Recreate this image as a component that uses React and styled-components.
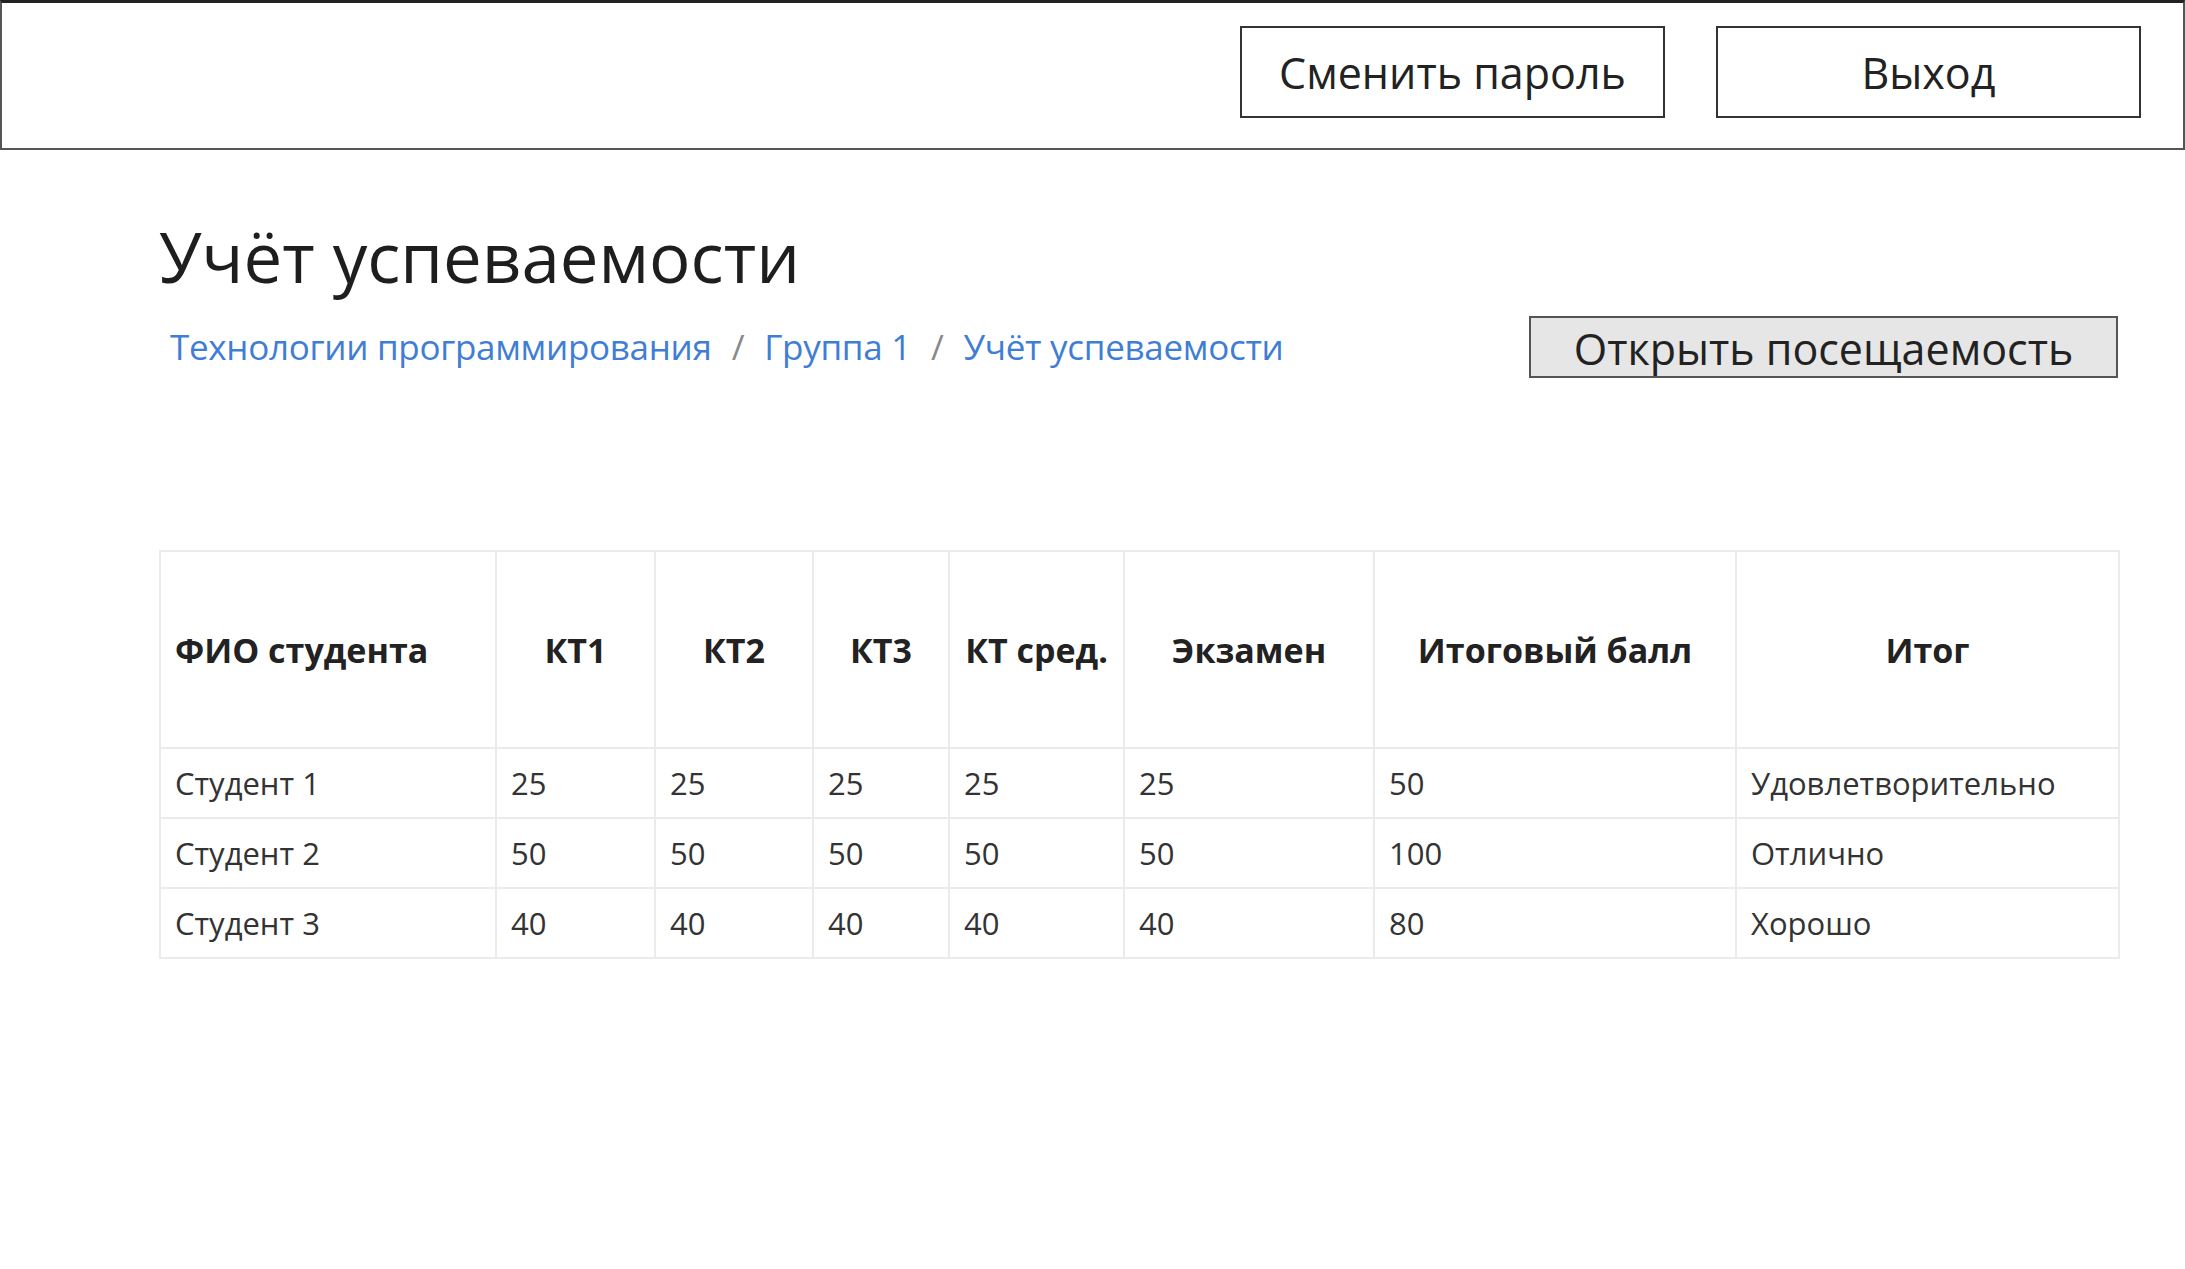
import styled, { createGlobalStyle } from 'styled-components'

const GlobalStyle = createGlobalStyle`
  html, body {
    margin: 0;
    padding: 0;
    background: #FFFFFF;
  }
  body {
    font-family: "Open Sans", "Noto Sans", "Liberation Sans", sans-serif;
    color: #222222;
  }
`

const TopBar = styled.header`
  box-sizing: border-box;
  height: 150px;
  display: flex;
  flex-direction: row;
  justify-content: flex-end;
  align-items: center;
  gap: 51px;
  padding-right: 42px;
  border: 2px solid #555555;
  border-top: 3px solid #222222;
`

const BarButton = styled.button`
  box-sizing: border-box;
  width: 425px;
  height: 92px;
  margin-top: -7px;
  background: #FFFFFF;
  border: 2px solid #333333;
  font-family: inherit;
  font-size: 43px;
  color: #222222;
  cursor: pointer;
`

const Content = styled.main`
  padding: 58px 67px 0 159px;
`

const Title = styled.h1`
  margin: 0;
  font-size: 69px;
  font-weight: 400;
  line-height: 96px;
  color: #1E1E1E;
`

const CrumbRow = styled.div`
  display: flex;
  flex-direction: row;
  justify-content: space-between;
  align-items: center;
  margin-top: 4px;
`

const Crumbs = styled.nav`
  display: flex;
  flex-direction: row;
  align-items: center;
  gap: 20px;
  padding-left: 11px;
  padding-top: 6px;
  font-size: 35px;
  letter-spacing: -0.3px;
`

const Crumb = styled.a`
  color: #3F7ED4;
  text-decoration: none;
  cursor: pointer;
`

const Slash = styled.span`
  color: #8A8A8A;
`

const AttendanceButton = styled.button`
  box-sizing: border-box;
  width: 589px;
  height: 62px;
  margin-top: 8px;
  background: #E6E6E6;
  border: 2px solid #555555;
  font-family: inherit;
  font-size: 43px;
  color: #222222;
  cursor: pointer;
`

const GradesTable = styled.table`
  width: 1959px;
  margin-top: 172px;
  border-collapse: collapse;
  table-layout: fixed;
  font-size: 31px;
`

const HeadCell = styled.th`
  height: 195px;
  padding: 0 14px;
  border: 2px solid #EBEBEB;
  font-size: 34px;
  font-weight: 700;
  color: #222222;
  text-align: ${p => (p.$left ? 'left' : 'center')};
`

const Cell = styled.td`
  height: 68px;
  padding: 0 14px;
  border: 2px solid #EBEBEB;
  color: #333333;
  text-align: left;
`

const columns = [
  { title: 'ФИО студента', width: 336, left: true },
  { title: 'КТ1', width: 159 },
  { title: 'КТ2', width: 158 },
  { title: 'КТ3', width: 136 },
  { title: 'КТ сред.', width: 175 },
  { title: 'Экзамен', width: 250 },
  { title: 'Итоговый балл', width: 362 },
  { title: 'Итог', width: 383 },
]

const students = [
  ['Студент 1', 25, 25, 25, 25, 25, 50, 'Удовлетворительно'],
  ['Студент 2', 50, 50, 50, 50, 50, 100, 'Отлично'],
  ['Студент 3', 40, 40, 40, 40, 40, 80, 'Хорошо'],
]

export default function App() {
  return (
    <>
      <GlobalStyle />
      <TopBar>
        <BarButton>Сменить пароль</BarButton>
        <BarButton>Выход</BarButton>
      </TopBar>
      <Content>
        <Title>Учёт успеваемости</Title>
        <CrumbRow>
          <Crumbs>
            <Crumb>Технологии программирования</Crumb>
            <Slash>/</Slash>
            <Crumb>Группа 1</Crumb>
            <Slash>/</Slash>
            <Crumb>Учёт успеваемости</Crumb>
          </Crumbs>
          <AttendanceButton>Открыть посещаемость</AttendanceButton>
        </CrumbRow>
        <GradesTable>
          <colgroup>
            {columns.map(col => <col key={col.title} style={{ width: col.width }} />)}
          </colgroup>
          <thead>
            <tr>
              {columns.map(col => (
                <HeadCell key={col.title} $left={col.left}>{col.title}</HeadCell>
              ))}
            </tr>
          </thead>
          <tbody>
            {students.map(row => (
              <tr key={row[0]}>
                {row.map((value, index) => <Cell key={index}>{value}</Cell>)}
              </tr>
            ))}
          </tbody>
        </GradesTable>
      </Content>
    </>
  )
}
